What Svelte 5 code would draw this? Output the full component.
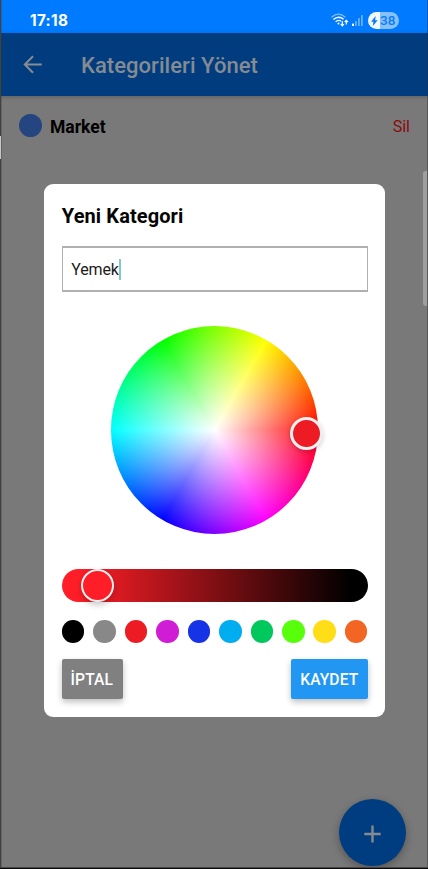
<script>
  let name = $state('Yemek');
  const swatches = ['#000000', '#888888', '#ed1c24', '#d11cd5', '#1633e6', '#00aeef', '#00c85d', '#57ff0a', '#ffde17', '#f26522'];
</script>

<div class="screen">
  <div class="status">
    <span class="time">17:18</span>
    <div class="indicators">
      <svg class="wifi" width="18" height="14" viewBox="0 0 18 14" fill="none" stroke="#fff">
        <path d="M.6 4.2Q7.5-2 14.3 4.2" stroke-width="1.3" opacity=".5" />
        <path d="M2.4 6.5Q7.5 2 12.6 6.2" stroke-width="1.4" />
        <path d="M4.6 8.8Q7.5 6.2 10 8.3" stroke-width="1.4" />
        <circle cx="7.5" cy="10.6" r="1" fill="#fff" stroke="none" />
        <path d="M11.3 8v4.7M9.7 11.2l1.6 1.7 1.6-1.7M15.3 11.5V7.3M13.7 9l1.6-1.7L16.9 9" stroke-width="1.2" />
      </svg>
      <svg class="signal" width="12" height="13" viewBox="0 0 12 13" fill="#fff">
        <rect x="0" y="9.5" width="2" height="2.5" rx=".5" />
        <g opacity=".4">
          <rect x="3" y="7" width="1.8" height="5" rx=".5" />
          <rect x="6" y="4" width="1.8" height="8" rx=".5" />
          <rect x="9" y="1" width="1.8" height="11" rx=".5" />
        </g>
      </svg>
      <div class="battery">
        <svg width="7" height="10" viewBox="0 0 7 10"><path d="M4.6 0 .1 5.7h2.3L1.8 10l4.9-5.8H4.2z" fill="#087cf8" /></svg>
        <span>38</span>
      </div>
    </div>
  </div>

  <header>
    <svg width="20" height="20" viewBox="0 0 20 20" fill="none" stroke="#878b92" stroke-width="2">
      <path d="M18.8 9.5H2.2M10 1.3 1.8 9.5l8.2 8.2" />
    </svg>
    <h1>Kategorileri Yönet</h1>
  </header>

  <main>
    <div class="row">
      <span class="dot"></span>
      <span class="label">Market</span>
      <span class="delete">Sil</span>
    </div>
  </main>

  <div class="fab">
    <svg width="17" height="18" viewBox="0 0 17 18" stroke="#858b91" stroke-width="2.4"><path d="M8.5.5v17M.3 9h16.4" /></svg>
  </div>
  <div class="scroll"></div>
  <div class="edge left"></div>
  <div class="edge mark"></div>
  <div class="edge right"></div>
  <div class="edge bottom"></div>

  <div class="overlay">
    <section class="modal">
      <h2>Yeni Kategori</h2>
      <div class="field"><span>{name}</span><i></i></div>
      <div class="wheel"><div class="thumb"></div></div>
      <div class="slider"><div class="knob"></div></div>
      <div class="swatches">
        {#each swatches as color}
          <span style="background: {color}"></span>
        {/each}
      </div>
      <div class="actions">
        <button class="cancel">İPTAL</button>
        <button class="save">KAYDET</button>
      </div>
    </section>
  </div>
</div>

<style>
  :global(body) { margin: 0; }
  .screen {
    position: relative;
    display: flex;
    flex-direction: column;
    width: 428px;
    height: 869px;
    overflow: hidden;
    background: #797979;
    font-family: Roboto, "Liberation Sans", sans-serif;
  }
  * { box-sizing: border-box; }
  .status {
    display: flex;
    justify-content: space-between;
    height: 33px;
    padding: 11px 29px 0 30px;
    background: #007bff;
    color: #fff;
  }
  .time { font: 700 15.3px/19px Inter, Roboto, sans-serif; letter-spacing: 0.3px; }
  .indicators { display: flex; align-items: flex-start; }
  .wifi { margin: 2px 3px 0 0; }
  .signal { margin: 3px 4px 0 0; }
  .battery {
    display: flex;
    align-items: center;
    gap: 2px;
    width: 31px;
    height: 17px;
    margin-top: 1px;
    padding-left: 3px;
    border-radius: 9px;
    background: linear-gradient(90deg, #f1f8ff 12px, #86c0ff 12px);
    color: #087cf8;
    font: 500 13.5px/17px Roboto, sans-serif;
  }
  header {
    display: flex;
    align-items: center;
    flex: none;
    height: 63px;
    padding: 0 23px 0 23px;
    background: #003c7e;
    box-shadow: 0 1px 4px rgba(0, 0, 0, .22);
  }
  h1 {
    margin: 2px 0 0 38px;
    color: #858b92;
    font-size: 22px;
    font-weight: 500;
    line-height: 28px;
    letter-spacing: 0.05px;
    white-space: nowrap;
  }
  .row { display: flex; align-items: center; height: 60px; padding: 0 18px 0 19px; }
  .dot { width: 23px; height: 23px; margin-top: -1px; border-radius: 50%; background: #24457f; }
  .label { margin: 1px auto 0 8px; font-size: 17.5px; font-weight: 700; }
  .delete { margin-top: 1px; color: #8a0a0b; font-size: 16px; }
  .fab {
    position: absolute;
    left: 339px;
    top: 799px;
    display: flex;
    align-items: center;
    justify-content: center;
    width: 67px;
    height: 67px;
    padding: 2px 1px 0 0;
    border-radius: 50%;
    background: #003d80;
    box-shadow: 0 3px 8px rgba(0, 0, 0, .3);
  }
  .scroll { position: absolute; left: 423px; top: 171px; width: 4px; height: 135px; border-radius: 3px 0 0 3px; background: #9f9f9f; }
  .edge { position: absolute; }
  .left { left: 0; top: 0; bottom: 0; width: 1px; background: #424242; box-shadow: 1px 0 rgba(60, 60, 60, .35); }
  .mark { left: 0; top: 136px; width: 1px; height: 23px; background: #c8c8c8; }
  .right { right: 0; top: 0; bottom: 0; width: 1px; background: rgba(40, 40, 40, .4); }
  .bottom { left: 0; right: 0; bottom: 0; height: 2px; background: linear-gradient(#464646 1px, #090909 1px); }
  .overlay {
    position: absolute;
    inset: 0;
    display: flex;
    align-items: flex-start;
    padding: 184px 43px 0 44px;
  }
  .modal {
    display: flex;
    flex-direction: column;
    width: 341px;
    height: 533px;
    padding: 18px 17.5px 18px 17.8px;
    border-radius: 9px;
    background: #fff;
  }
  h2 { margin: 0; color: #050505; font-size: 20px; font-weight: 700; line-height: 28px; letter-spacing: 0.1px; white-space: nowrap; }
  .field {
    display: flex;
    align-items: center;
    height: 46px;
    margin-top: 16px;
    padding-left: 8.5px;
    border: 2px solid #b0b0b0;
    border-width: 2px 1px;
    color: #1b1b1b;
    font-size: 16px;
    letter-spacing: -0.15px;
  }
  .field i { width: 2.4px; height: 21px; background: #80cbc4; }
  .wheel {
    position: relative;
    width: 207.5px;
    height: 208px;
    margin: 34px 0 0 49px;
    border-radius: 50%;
    background:
      radial-gradient(circle closest-side, #fff, rgba(255, 255, 255, 0)),
      conic-gradient(from 90deg, #f00, #f0f, #00f, #0ff, #0f0, #ff0, #f00);
  }
  .thumb {
    position: absolute;
    left: 179px;
    top: 91px;
    width: 33px;
    height: 33px;
    border: 3px solid #f0f0f0;
    border-radius: 50%;
    background: #ed1c24;
    box-shadow: 0 2px 5px rgba(0, 0, 0, .18);
  }
  .slider {
    position: relative;
    height: 33px;
    margin-top: 35px;
    border-radius: 17px;
    background: linear-gradient(90deg, #ff1e27 16px, #000 289px);
  }
  .knob {
    position: absolute;
    left: 19px;
    top: 0;
    width: 33px;
    height: 33px;
    border: 2px solid #f0f0f0;
    border-radius: 50%;
    background: #ff1e27;
    box-shadow: 0 3px 6px rgba(0, 0, 0, .22);
  }
  .swatches { display: flex; justify-content: space-between; margin-top: 18px; }
  .swatches span { width: 22.6px; height: 22.6px; border-radius: 50%; }
  .actions { display: flex; justify-content: space-between; margin-top: 16.4px; }
  button {
    height: 40px;
    padding: 2px 0 0;
    border: 0;
    border-radius: 2px;
    color: #fff;
    font: 500 15.6px/38px Roboto, "Liberation Sans", sans-serif;
    letter-spacing: 0.1px;
    box-shadow: 0 3px 6px rgba(0, 0, 0, .25);
  }
  .cancel { width: 61px; padding-right: 1px; background: #808080; }
  .save { width: 76.5px; background: #2196f3; }
</style>
